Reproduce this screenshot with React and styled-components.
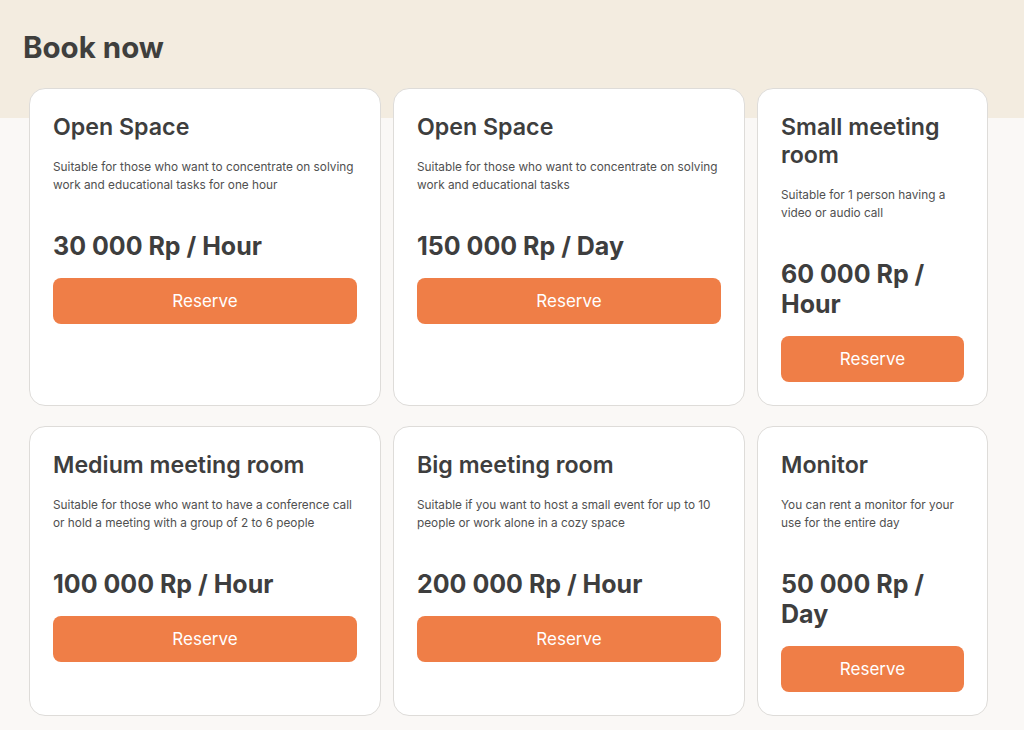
import React from 'react'
import styled, {createGlobalStyle} from 'styled-components'

const GlobalStyle = createGlobalStyle`
    html, body {
        margin: 0;
        padding: 0;
    }
    body {
        font-family: Inter, "Noto Sans", sans-serif;
        background: linear-gradient(#f3ece0 0, #f3ece0 118px, #faf8f6 118px);
        min-height: 730px;
        color: #3e3e3e;
    }
`;

const offers = [
    {title: 'Open Space', text: 'Suitable for those who want to concentrate on solving work and educational tasks for one hour', price: '30 000 Rp / Hour'},
    {title: 'Open Space', text: 'Suitable for those who want to concentrate on solving work and educational tasks', price: '150 000 Rp / Day'},
    {title: 'Small meeting room', text: 'Suitable for 1 person having a video or audio call', price: '60 000 Rp / Hour'},
    {title: 'Medium meeting room', text: 'Suitable for those who want to have a conference call or hold a meeting with a group of 2 to 6 people', price: '100 000 Rp / Hour'},
    {title: 'Big meeting room', text: 'Suitable if you want to host a small event for up to 10 people or work alone in a cozy space', price: '200 000 Rp / Hour'},
    {title: 'Monitor', text: 'You can rent a monitor for your use for the entire day', price: '50 000 Rp / Day'},
];

class App extends React.Component {

    render() {
        return (
            <Page>
                <GlobalStyle/>
                <Heading>Book now</Heading>
                <Grid>
                    {offers.map((o, i) => (
                        <Card key={i}>
                            <CardTitle>{o.title}</CardTitle>
                            <CardText>{o.text}</CardText>
                            <Price>{o.price}</Price>
                            <ReserveButton>Reserve</ReserveButton>
                        </Card>
                    ))}
                </Grid>
            </Page>
        );
    }
}

export default App

const Page = styled.main`
    padding: 30px 0 0 23px;
`;

const Heading = styled.h1`
    margin: 0;
    font-size: 29.5px;
    line-height: 34px;
    font-weight: 700;
    color: #3f3f3d;
`;

const Grid = styled.div`
    margin: 24px 0 0 6px;
    display: grid;
    grid-template-columns: 352px 352px 231px;
    column-gap: 12px;
    row-gap: 20px;
`;

const Card = styled.section`
    background: #fff;
    border: 1px solid #dedcd9;
    border-radius: 16px;
    padding: 24px 23px 23px;
    display: flex;
    flex-direction: column;
    align-items: stretch;
`;

const CardTitle = styled.h2`
    margin: 0;
    font-size: 23.2px;
    line-height: 28px;
    font-weight: 600;
    color: #3e3e3e;
`;

const CardText = styled.p`
    margin: 17px 0 0;
    font-size: 11.8px;
    line-height: 18px;
    color: #505050;
`;

const Price = styled.div`
    margin-top: 37px;
    font-size: 25px;
    line-height: 30px;
    font-weight: 700;
    color: #3e3e3e;
`;

const ReserveButton = styled.button`
    margin-top: 17px;
    height: 46px;
    border: none;
    border-radius: 8px;
    background: #ef7e47;
    color: #fff;
    font-family: inherit;
    font-size: 17px;
    font-weight: 400;
    cursor: pointer;
`;
